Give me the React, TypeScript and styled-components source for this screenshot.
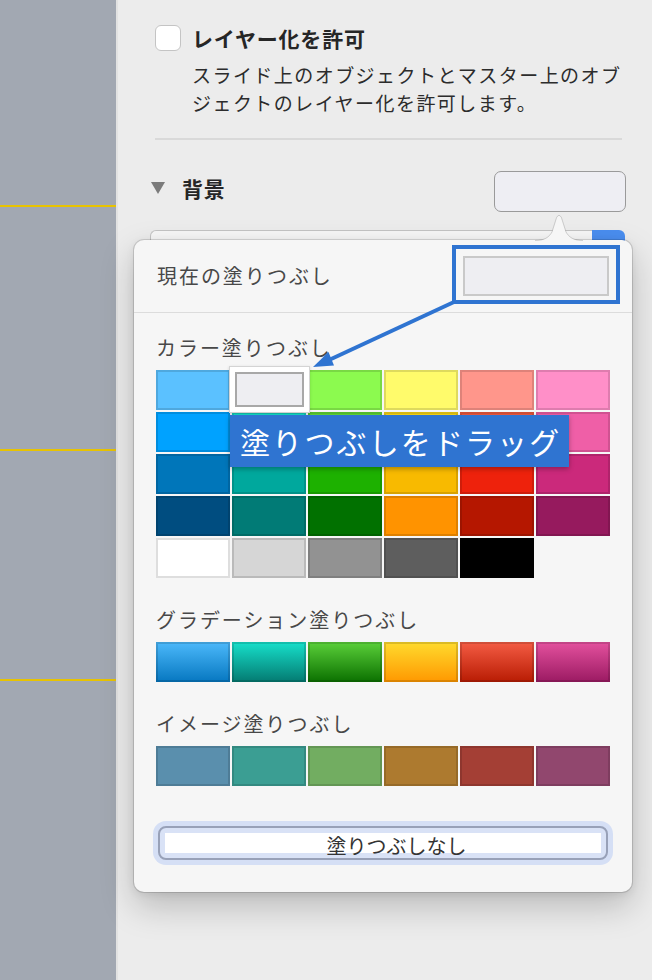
import React from "react";
import styled, { createGlobalStyle } from "styled-components";

const GlobalStyle = createGlobalStyle`
  html, body { margin: 0; padding: 0; }
  body {
    width: 652px;
    height: 980px;
    overflow: hidden;
    background: #ececec;
    font-family: "Noto Sans CJK JP", "Noto Sans", sans-serif;
  }
`;

const Page = styled.div`
  display: flex;
  width: 652px;
  height: 980px;
`;

const Sidebar = styled.aside`
  flex: none;
  width: 118px;
  box-sizing: border-box;
  padding-top: 205px;
  display: flex;
  flex-direction: column;
  background: #a2a8b2;
  border-right: 2px solid #e2e2e2;
`;

const Guide = styled.div<{ $gap: number }>`
  height: 2px;
  margin-top: ${(p) => p.$gap}px;
  background: #e8c300;
`;

const Panel = styled.main`
  position: relative;
  flex: 1;
  box-sizing: border-box;
  padding: 25px 30px 0 37px;
  background: #ececec;
`;

const CheckRow = styled.div`
  display: flex;
  align-items: center;
  gap: 11px;
`;

const Checkbox = styled.div`
  width: 26px;
  height: 26px;
  box-sizing: border-box;
  border: 1px solid #c4c4c4;
  border-radius: 6px;
  background: #fff;
`;

const Heading = styled.div<{ $indent?: number }>`
  margin-left: ${(p) => p.$indent ?? 0}px;
  font-size: 21px;
  font-weight: 700;
  letter-spacing: 0.8px;
  line-height: 26px;
  color: #262626;
`;

const Description = styled.p`
  margin: 10px 0 0 37px;
  font-size: 19px;
  letter-spacing: 1.45px;
  line-height: 28px;
  color: #2c2c2c;
  white-space: nowrap;
`;

const Divider = styled.div`
  margin-top: 21px;
  height: 2px;
  background: #d9d9d9;
`;

const SectionRow = styled.div`
  margin: 31px -4px 0 0;
  display: flex;
  align-items: center;
  justify-content: space-between;
`;

const SectionTitle = styled.div`
  display: flex;
  align-items: center;
  margin-bottom: 8px;
`;

const Disclosure = styled.span`
  margin-left: -4px;
  width: 0;
  height: 0;
  border-left: 7px solid transparent;
  border-right: 7px solid transparent;
  border-top: 12px solid #7b7b7b;
`;

const FillWell = styled.div`
  width: 132px;
  height: 41px;
  box-sizing: border-box;
  border: 1px solid #9a9a9a;
  border-radius: 7px;
  background: #eeeef3;
`;

const HiddenRow = styled.div`
  margin: 18px -3px 0 -5px;
  height: 30px;
  display: flex;
`;

const HiddenField = styled.div`
  flex: 1;
  box-sizing: border-box;
  border: 1px solid #c4c4c4;
  border-right: none;
  border-radius: 6px 0 0 6px;
  background: #f7f7f7;
`;

const HiddenStepper = styled.div`
  width: 33px;
  border-radius: 0 6px 6px 0;
  background: #4a8ef0;
`;

const Popover = styled.section`
  position: absolute;
  left: 16px;
  top: 240px;
  width: 498px;
  box-sizing: border-box;
  padding: 0 22px 32px;
  background: #f6f6f6;
  border-radius: 10px;
  box-shadow: 0 0 0 1px rgba(0, 0, 0, 0.13), 0 14px 34px rgba(0, 0, 0, 0.22),
    0 2px 8px rgba(0, 0, 0, 0.08);
  z-index: 2;
`;

const PointerSvg = styled.svg`
  position: absolute;
  top: -27px;
  left: 401px;
  width: 48px;
  height: 29px;
  overflow: visible;
`;

const Header = styled.div`
  margin: 0 -22px;
  padding: 0 23px;
  height: 72px;
  display: flex;
  align-items: center;
  justify-content: space-between;
  border-bottom: 1px solid #dcdcdc;
`;

const Label = styled.div<{ $top?: number }>`
  margin-top: ${(p) => p.$top ?? 0}px;
  margin-bottom: ${(p) => (p.$top === undefined ? 0 : 10)}px;
  font-size: 20px;
  letter-spacing: 1.95px;
  line-height: 24px;
  color: #484848;
`;

const WellWrap = styled.div`
  position: relative;
`;

const CurrentWell = styled.div`
  width: 146px;
  height: 40px;
  box-sizing: border-box;
  border: 2px solid #c9c9c9;
  background: #eeeef2;
`;

const Highlight = styled.div`
  position: absolute;
  top: -11px;
  left: -11px;
  right: -11px;
  bottom: -8px;
  border: 4px solid #2f74d1;
`;

const Grid = styled.div`
  position: relative;
  display: grid;
  grid-template-columns: repeat(6, 74px);
  grid-auto-rows: 40px;
  gap: 2px;
`;

const Swatch = styled.div<{ $c: string }>`
  background: ${(p) => p.$c};
  box-shadow: inset 0 0 0 2px rgba(0, 0, 0, 0.13);
`;

const GradientSwatch = styled.div<{ $from: string; $to: string }>`
  background: linear-gradient(${(p) => p.$from}, ${(p) => p.$to});
  box-shadow: inset 0 0 0 2px rgba(0, 0, 0, 0.14);
`;

const DragImage = styled.div`
  position: absolute;
  left: 73px;
  top: -4px;
  width: 81px;
  height: 47px;
  box-sizing: border-box;
  padding: 5px;
  background: #fff;
  border: 1px solid #d4d4d4;
  box-shadow: 0 1px 3px rgba(0, 0, 0, 0.15);
`;

const DragSwatch = styled.div`
  height: 100%;
  box-sizing: border-box;
  border: 2px solid #a8a8a8;
  background: #eeeef2;
`;

const Tooltip = styled.div`
  position: absolute;
  left: 74px;
  top: 45px;
  height: 52px;
  padding: 0 8px 0 10px;
  background: #2f74d1;
  color: #fff;
  font-size: 30px;
  letter-spacing: 2.1px;
  line-height: 52px;
  white-space: nowrap;
  box-shadow: 0 2px 5px rgba(0, 0, 0, 0.3);
`;

const Annotation = styled.svg`
  position: absolute;
  left: 0;
  top: 0;
  width: 498px;
  height: 652px;
  overflow: visible;
  pointer-events: none;
  z-index: 3;
`;

const NoneButton = styled.div`
  margin: 40px 2px 0;
  height: 34px;
  box-sizing: border-box;
  padding: 5px;
  border: 2px solid #98a1b8;
  border-radius: 8px;
  background: #d9e2f6;
  box-shadow: 0 0 0 5px #d5dff5;
`;

const NoneFace = styled.div`
  height: 20px;
  box-sizing: border-box;
  padding-left: 27px;
  background: #fff;
  text-align: center;
  font-size: 20px;
  line-height: 26px;
  color: #333;
  white-space: nowrap;
`;

const solid = [
  ["#5bc1ff", "#73fdea", "#8cfa4f", "#fffb6b", "#ff968b", "#ff8fc8"],
  ["#00a2ff", "#16e7cf", "#61d836", "#fad717", "#f05a3f", "#ef5fa7"],
  ["#0076ba", "#00a89d", "#1db100", "#f8ba00", "#ee220c", "#cb297b"],
  ["#004d80", "#017b76", "#017100", "#ff9300", "#b51700", "#961a5e"],
  ["#ffffff", "#d6d6d6", "#929292", "#5e5e5e", "#000000"],
];

const gradients: [string, string][] = [
  ["#4cb9fb", "#0677c0"],
  ["#17e0cb", "#047a71"],
  ["#5bd03a", "#0b7000"],
  ["#ffdb2e", "#ff9800"],
  ["#f45c44", "#b81c03"],
  ["#e4519e", "#9b1a62"],
];

const images = ["#5a8fad", "#3b9e93", "#72ad61", "#ad7a2f", "#a43f35", "#91476e"];

export default function App() {
  return (
    <>
      <GlobalStyle />
      <Page>
        <Sidebar>
          <Guide $gap={0} />
          <Guide $gap={242} />
          <Guide $gap={228} />
        </Sidebar>
        <Panel>
          <CheckRow>
            <Checkbox />
            <Heading>レイヤー化を許可</Heading>
          </CheckRow>
          <Description>
            スライド上のオブジェクトとマスター上のオブ
            <br />
            ジェクトのレイヤー化を許可します。
          </Description>
          <Divider />
          <SectionRow>
            <SectionTitle>
              <Disclosure />
              <Heading $indent={17}>背景</Heading>
            </SectionTitle>
            <FillWell />
          </SectionRow>
          <HiddenRow>
            <HiddenField />
            <HiddenStepper />
          </HiddenRow>

          <Popover>
            <PointerSvg viewBox="0 0 48 29">
              <path
                d="M0 28.5 L0 27.5 C10 27.5 14 24 17 19 L21.6 4.5 Q24 0.2 26.4 4.5 L31 19 C34 24 38 27.5 48 27.5 L48 28.5 Z"
                fill="#f6f6f6"
              />
              <path
                d="M0 27.5 C10 27.5 14 24 17 19 L21.6 4.5 Q24 0.2 26.4 4.5 L31 19 C34 24 38 27.5 48 27.5"
                fill="none"
                stroke="rgba(0,0,0,0.16)"
                strokeWidth="1"
              />
            </PointerSvg>
            <Header>
              <Label>現在の塗りつぶし</Label>
              <WellWrap>
                <CurrentWell />
                <Highlight />
              </WellWrap>
            </Header>

            <Label $top={23}>カラー塗りつぶし</Label>
            <Grid>
              {solid.flat().map((c, i) => (
                <Swatch key={i} $c={c} />
              ))}
              <DragImage>
                <DragSwatch />
              </DragImage>
              <Tooltip>塗りつぶしをドラッグ</Tooltip>
            </Grid>

            <Label $top={30}>グラデーション塗りつぶし</Label>
            <Grid>
              {gradients.map(([a, b], i) => (
                <GradientSwatch key={i} $from={a} $to={b} />
              ))}
            </Grid>

            <Label $top={30}>イメージ塗りつぶし</Label>
            <Grid>
              {images.map((c, i) => (
                <Swatch key={i} $c={c} />
              ))}
            </Grid>

            <NoneButton>
              <NoneFace>塗りつぶしなし</NoneFace>
            </NoneButton>

            <Annotation viewBox="0 0 498 652">
              <line x1="320" y1="62" x2="195" y2="120" stroke="#2f74d1" strokeWidth="4" />
              <polygon points="179,127 200,125.5 194.5,112" fill="#2f74d1" />
            </Annotation>
          </Popover>
        </Panel>
      </Page>
    </>
  );
}
